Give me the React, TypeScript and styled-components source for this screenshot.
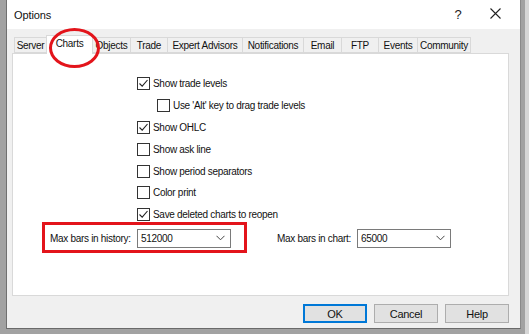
import styled, { createGlobalStyle } from "styled-components";

const Global = createGlobalStyle`
  html, body {
    margin: 0;
    padding: 0;
  }
  body {
    width: 529px;
    height: 334px;
    overflow: hidden;
    background: linear-gradient(to right, #a2a2a2 525px, #d6d6d6 525px);
    font-family: "Liberation Sans", Arial, sans-serif;
    font-size: 10px;
    letter-spacing: -0.3px;
    color: #111;
  }
`;

const Screen = styled.div`
  padding-left: 6px;
  height: 334px;
`;

const Dialog = styled.div`
  position: relative;
  width: 513px;
  height: 328px;
  background: #f0f0f0;
  border-left: 1px solid #707070;
  border-right: 1px solid #8a8a8a;
  border-bottom: 1px solid #6a6a6a;
  display: flex;
  flex-direction: column;
`;

const TitleBar = styled.div`
  height: 29px;
  background: #fff;
  display: flex;
  align-items: center;
  padding-left: 7px;
  font-size: 11px;
  letter-spacing: -0.1px;
`;

const Title = styled.div`
  flex: 1;
`;

const TitleButton = styled.div<{ $w: number }>`
  width: ${(p) => p.$w}px;
  text-align: center;
  font-size: 13px;
  color: #222;
`;

const Body = styled.div`
  flex: 1;
  display: flex;
  flex-direction: column;
  padding: 6px 11px 0 5px;
`;

const TabRow = styled.div`
  display: flex;
  align-items: flex-end;
  height: 18px;
  padding-left: 3px;
  position: relative;
  z-index: 1;
`;

const Tab = styled.div<{ $w: number; $active?: boolean }>`
  width: ${(p) => p.$w}px;
  height: ${(p) => (p.$active ? 19 : 16)}px;
  box-sizing: border-box;
  border: 1px solid #d9d9d9;
  border-bottom: ${(p) => (p.$active ? "none" : "1px solid #d9d9d9")};
  margin-left: -1px;
  background: ${(p) => (p.$active ? "#fff" : "#f0f0f0")};
  display: flex;
  align-items: center;
  justify-content: center;
  padding-bottom: ${(p) => (p.$active ? 4 : 0)}px;
  margin-bottom: ${(p) => (p.$active ? -1 : 0)}px;
  color: #111;
`;

const Panel = styled.div`
  height: 243px;
  box-sizing: border-box;
  background: #fff;
  border: 1px solid #d9d9d9;
  padding-top: 19px;
  display: flex;
  flex-direction: column;
`;

const CheckList = styled.div`
  display: flex;
  flex-direction: column;
  padding-left: 124px;
`;

const CheckRow = styled.div<{ $indent?: boolean }>`
  height: 21.8px;
  display: flex;
  align-items: center;
  gap: 3px;
  padding-left: ${(p) => (p.$indent ? 20 : 0)}px;
`;

const Box = styled.div`
  width: 13px;
  height: 13px;
  box-sizing: border-box;
  border: 1px solid #333;
  background: #fff;
  display: flex;
  align-items: center;
  justify-content: center;
`;

const FieldRow = styled.div`
  display: flex;
  align-items: center;
  margin-top: 3px;
  padding-left: 37px;
  height: 19px;
`;

const FieldLabel = styled.div<{ $w: number }>`
  width: ${(p) => p.$w}px;
`;

const Combo = styled.div`
  width: 94px;
  height: 19px;
  box-sizing: border-box;
  border: 1px solid #7a7a7a;
  background: #fff;
  display: flex;
  align-items: center;
  padding: 0 5px 0 3px;
  justify-content: space-between;
`;

const Spacer = styled.div<{ $w: number }>`
  width: ${(p) => p.$w}px;
`;

const ButtonRow = styled.div`
  display: flex;
  justify-content: flex-end;
  gap: 7px;
  margin-top: 8px;
`;

const Button = styled.div<{ $default?: boolean }>`
  width: 64px;
  height: 19px;
  box-sizing: border-box;
  background: #e1e1e1;
  border: 1px solid ${(p) => (p.$default ? "#0078d7" : "#adadad")};
  box-shadow: ${(p) => (p.$default ? "inset 0 0 0 1px #0078d7" : "none")};
  display: flex;
  align-items: center;
  justify-content: center;
  font-size: 11px;
`;

const Ellipse = styled.div`
  position: absolute;
  left: 42px;
  top: 28px;
  width: 45px;
  height: 34px;
  border: 3px solid #e3141b;
  border-radius: 50%;
  z-index: 3;
`;

const Highlight = styled.div`
  position: absolute;
  left: 35px;
  top: 222px;
  width: 199px;
  height: 25px;
  border: 3px solid #e3141b;
  z-index: 3;
`;

const Check = () => (
  <svg width="11" height="11" viewBox="0 0 11 11">
    <path d="M1.5 5.5 L4.2 8.2 L9.5 2" fill="none" stroke="#222" strokeWidth="1.1" />
  </svg>
);

const Chevron = () => (
  <svg width="9" height="6" viewBox="0 0 9 6">
    <path d="M0.5 0.8 L4.5 4.8 L8.5 0.8" fill="none" stroke="#444" strokeWidth="1" />
  </svg>
);

const tabs: [string, number][] = [
  ["Server", 33],
  ["Charts", 47],
  ["Objects", 39],
  ["Trade", 38],
  ["Expert Advisors", 76],
  ["Notifications", 62],
  ["Email", 39],
  ["FTP", 38],
  ["Events", 40],
  ["Community", 54],
];

const options: [string, boolean, boolean?][] = [
  ["Show trade levels", true],
  ["Use 'Alt' key to drag trade levels", false, true],
  ["Show OHLC", true],
  ["Show ask line", false],
  ["Show period separators", false],
  ["Color print", false],
  ["Save deleted charts to reopen", true],
];

export default function App() {
  return (
    <>
      <Global />
      <Screen>
        <Dialog>
          <TitleBar>
            <Title>Options</Title>
            <TitleButton $w={24}>?</TitleButton>
            <TitleButton $w={50}>
              <svg width="11" height="11" viewBox="0 0 11 11">
                <path d="M0.5 0.5 L10.5 10.5 M10.5 0.5 L0.5 10.5" stroke="#222" strokeWidth="1.1" />
              </svg>
            </TitleButton>
          </TitleBar>
          <Body>
            <TabRow>
              {tabs.map(([name, w]) => (
                <Tab key={name} $w={w} $active={name === "Charts"}>
                  {name}
                </Tab>
              ))}
            </TabRow>
            <Panel>
              <CheckList>
                {options.map(([label, checked, indent]) => (
                  <CheckRow key={label} $indent={indent}>
                    <Box>{checked && <Check />}</Box>
                    {label}
                  </CheckRow>
                ))}
              </CheckList>
              <FieldRow>
                <FieldLabel $w={87}>Max bars in history:</FieldLabel>
                <Combo>
                  512000
                  <Chevron />
                </Combo>
                <Spacer $w={46} />
                <FieldLabel $w={80}>Max bars in chart:</FieldLabel>
                <Combo>
                  65000
                  <Chevron />
                </Combo>
              </FieldRow>
            </Panel>
            <ButtonRow>
              <Button $default>OK</Button>
              <Button>Cancel</Button>
              <Button>Help</Button>
            </ButtonRow>
          </Body>
          <Ellipse />
          <Highlight />
        </Dialog>
      </Screen>
    </>
  );
}
